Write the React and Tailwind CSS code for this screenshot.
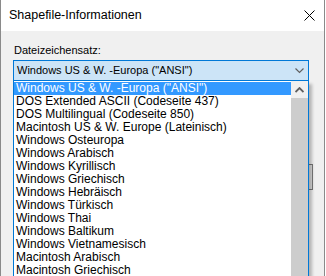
import React from 'react';

const encodings = [
  'Windows US & W. -Europa ("ANSI")',
  'DOS Extended ASCII (Codeseite 437)',
  'DOS Multilingual (Codeseite 850)',
  'Macintosh US & W. Europe (Lateinisch)',
  'Windows Osteuropa',
  'Windows Arabisch',
  'Windows Kyrillisch',
  'Windows Griechisch',
  'Windows Hebräisch',
  'Windows Türkisch',
  'Windows Thai',
  'Windows Baltikum',
  'Windows Vietnamesisch',
  'Macintosh Arabisch',
  'Macintosh Griechisch',
];

const App = () => {
  return (
    <div className="relative w-[326px] h-[276px] overflow-hidden bg-white font-['Liberation_Sans',sans-serif]">
      {/* dialog window */}
      <div className="flex flex-col w-[325px] h-[276px] border-x border-[#8a8a8a]">
        <div className="flex items-center justify-between h-[31px] bg-white pl-[8px] pr-[9px]">
          <span className="text-[12.5px] text-black">Shapefile-Informationen</span>
          <svg width="11" height="11" viewBox="0 0 11 11" className="mb-[1px]">
            <path d="M0.5 0.5 L10.5 10.5 M10.5 0.5 L0.5 10.5" stroke="#000" strokeWidth="1" />
          </svg>
        </div>
        <div className="relative flex-1 bg-[#f0f0f0] px-[12px] pt-[12px]">
          <div className="text-[11px] leading-[15px] pl-[1px] text-black">Dateizeichensatz:</div>
          <div className="mt-[2px] flex items-center justify-between h-[21px] w-[296px] border border-[#0078d7] bg-[#cce4f7] pl-[3px] pr-[4px]">
            <span className="text-[11px] text-black">Windows US &amp; W. -Europa ("ANSI")</span>
            <svg width="9" height="6" viewBox="0 0 9 6">
              <path d="M0.5 0.5 L4.5 4.5 L8.5 0.5" fill="none" stroke="#606060" strokeWidth="1.2" />
            </svg>
          </div>
          {/* button behind the open list */}
          <div className="absolute left-[290px] top-[133px] w-[22px] h-[26px] border border-[#7a7a7a] bg-[#e1e1e1]" />
        </div>
      </div>

      {/* open drop-down list */}
      <div className="absolute left-[13px] top-[81px] w-[296px] h-[200px] flex border-x border-[#0078d7] bg-white shadow-[3px_3px_3px_rgba(0,0,0,0.25)]">
        <div className="flex-1 pt-[1px]">
          {encodings.map((name, i) => (
            <div
              key={name}
              className={
                i === 0
                  ? 'h-[13px] leading-[13px] pl-[2px] text-[12px] whitespace-nowrap bg-[#3399ff] text-white'
                  : 'h-[13px] leading-[13px] pl-[2px] text-[12px] whitespace-nowrap text-black'
              }
            >
              {name}
            </div>
          ))}
        </div>
        <div className="flex flex-col w-[17px] bg-[#cdcdcd]">
          <div className="flex items-center justify-center h-[17px] bg-[#f0f0f0]">
            <svg width="9" height="6" viewBox="0 0 9 6">
              <path d="M0.5 5 L4.5 1 L8.5 5" fill="none" stroke="#606060" strokeWidth="1.8" />
            </svg>
          </div>
        </div>
      </div>
    </div>
  );
};

export default App;
